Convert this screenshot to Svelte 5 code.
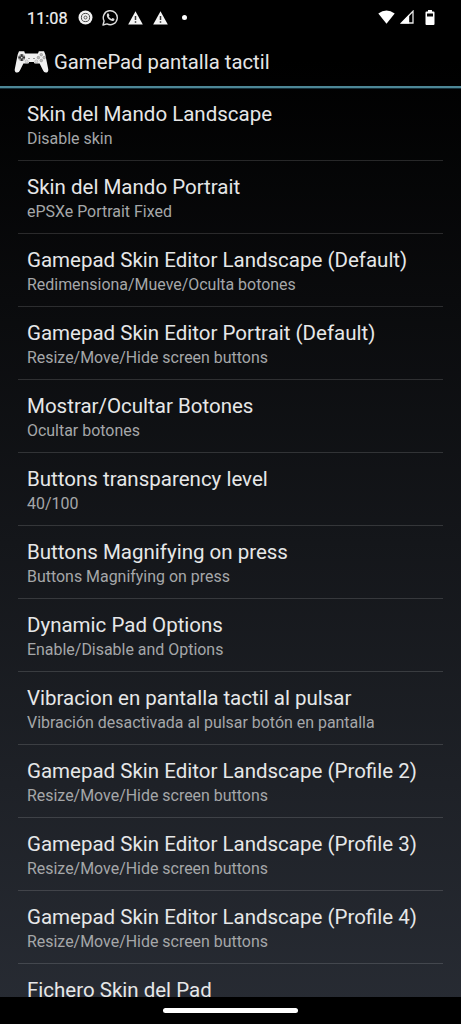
<script>
  const items = [
    ['Skin del Mando Landscape', 'Disable skin'],
    ['Skin del Mando Portrait', 'ePSXe Portrait Fixed'],
    ['Gamepad Skin Editor Landscape (Default)', 'Redimensiona/Mueve/Oculta botones'],
    ['Gamepad Skin Editor Portrait (Default)', 'Resize/Move/Hide screen buttons'],
    ['Mostrar/Ocultar Botones', 'Ocultar botones'],
    ['Buttons transparency level', '40/100'],
    ['Buttons Magnifying on press', 'Buttons Magnifying on press'],
    ['Dynamic Pad Options', 'Enable/Disable and Options'],
    ['Vibracion en pantalla tactil al pulsar', 'Vibración desactivada al pulsar botón en pantalla'],
    ['Gamepad Skin Editor Landscape (Profile 2)', 'Resize/Move/Hide screen buttons'],
    ['Gamepad Skin Editor Landscape (Profile 3)', 'Resize/Move/Hide screen buttons'],
    ['Gamepad Skin Editor Landscape (Profile 4)', 'Resize/Move/Hide screen buttons'],
    ['Fichero Skin del Pad', '']
  ];
</script>

<div class="screen">
  <div class="status">
    <span class="time">11:08</span>
    <svg class="ring" width="15" height="15" viewBox="0 0 15 15">
      <circle cx="7.5" cy="7.5" r="7" fill="#f2f2f2" />
      <circle cx="7.5" cy="7.5" r="4.1" fill="none" stroke="#444" stroke-width="1" />
      <circle cx="7.5" cy="7.5" r="1.5" fill="none" stroke="#555" stroke-width="1" />
    </svg>
    <svg class="chat" width="17" height="17" viewBox="0 0 17 17">
      <path d="M1 16l1.1-4A7 7 0 1 1 5 14.9z" fill="none" stroke="#ddd" stroke-width="1.4" stroke-linejoin="round" />
      <path d="M5.3 4.8c.6-.7 1.2-.6 1.5.1l.6 1.4c.1.4-.5.9-.6 1.2.6 1.2 1.5 2 2.7 2.5.4-.1.8-1 1.2-.9l1.5.7c.6.4.1 1.5-.5 1.9-1.2.8-3.2-.1-4.5-1.1C5.8 9.5 4 6.8 5.3 4.8z" fill="#ddd" />
    </svg>
    {#each [0, 1] as n}
      <svg class="warn" width="15" height="14" viewBox="0 0 15 14">
        <path d="M7.5 .3L14.8 13.5H.2z" fill="#f5f5f5" />
        <path d="M7.5 5v4M7.5 10.3v1.5" stroke="#333" stroke-width="1.5" />
      </svg>
    {/each}
    <span class="dot"></span>
    <span class="grow"></span>
    <svg class="wifi" width="17" height="14" viewBox="0 0 17 14">
      <path d="M.3 3.5Q8.5-2.7 16.7 3.5L8.5 13.7z" fill="#fff" />
    </svg>
    <svg class="signal" width="14" height="14" viewBox="0 0 14 14">
      <path d="M13 1.2V13H1.5z" fill="none" stroke="#e8e8e8" stroke-width="1.3" />
      <path d="M9.2 4.5V13.5H.7z" fill="#fff" />
    </svg>
    <svg class="battery" width="10" height="15" viewBox="0 0 10 15">
      <path d="M3 0h4v1.5h1.5q1 0 1 1V14q0 1-1 1h-7q-1 0-1-1V2.5q0-1 1-1H3z" fill="#fff" />
      <path d="M2 3.5h6v3H2z" fill="#080808" />
    </svg>
  </div>

  <header>
    <svg class="pad" width="35" height="24" viewBox="0 0 35 24">
      <path d="M5 1.2H10.2L11 3.4H24L24.8 1.2H30L31.3 4.4L34.3 19.5Q34.5 22.6 31.9 22.6Q30 22.7 29.1 20.5L25.6 13.5H20.6L19.8 12H15.2L14.4 13.5H9.4L5.9 20.5Q5 22.7 3.1 22.6Q.5 22.6 .7 19.5L3.7 4.4z" fill="#f1f1f1" />
      <circle cx="7.7" cy="7.6" r="3.5" fill="#aaa" />
      <path d="M7.7 4.3v6.6M4.4 7.6h6.600" stroke="#333" stroke-width="2" />
      <circle cx="7.7" cy="7.6" r=".9" fill="#ddd" />
      <path d="M14 8.5h2M19 8.5h2" stroke="#999" stroke-width="1.2" />
      <g fill="#bbb" stroke="#888" stroke-width=".6">
        <circle cx="27.3" cy="4.7" r="1.3" /><circle cx="27.3" cy="10.5" r="1.3" />
        <circle cx="24.4" cy="7.6" r="1.3" /><circle cx="30.2" cy="7.6" r="1.3" />
      </g>
      <circle cx="12.7" cy="11.4" r="1.5" fill="#ddd" stroke="#aaa" stroke-width=".6" />
      <circle cx="22.3" cy="11.4" r="1.5" fill="#ddd" stroke="#aaa" stroke-width=".6" />
    </svg>
    <h1>GamePad pantalla tactil</h1>
  </header>

  <main>
    {#each items as [title, summary]}
      <div class="row">
        <div class="title">{title}</div>
        <div class="summary">{summary}</div>
      </div>
    {/each}
  </main>

  <footer><span class="handle"></span></footer>
</div>

<style>
  :global(body) { background: #000; }
  .screen {
    width: 461px;
    height: 1024px;
    display: flex;
    flex-direction: column;
    overflow: hidden;
    font-family: Roboto, sans-serif;
    background: linear-gradient(#000 0, #000 60px, #282c34 1024px);
  }
  .status {
    flex: none;
    height: 36px;
    box-sizing: border-box;
    padding: 0 26px 1px 27px;
    display: flex;
    align-items: center;
    background: #000;
  }
  .status svg { flex: none; }
  .time { width: 51px; padding-top: 1px; font-size: 16.3px; color: #f2f2f2; -webkit-text-stroke: .2px #f2f2f2; }
  .chat { margin-left: 9px; }
  .warn { margin-left: 10px; }
  .chat + .warn { margin-left: 9px; }
  .dot { width: 5px; height: 5px; margin-left: 14px; border-radius: 50%; background: #fff; }
  .grow { flex: 1; }
  .wifi, .signal { margin-top: -2px; }
  .signal { margin-left: 5px; }
  .battery { margin-left: 11px; margin-top: -1px; }
  header {
    flex: none;
    height: 52px;
    box-sizing: border-box;
    padding: 2px 0 0 14px;
    display: flex;
    align-items: center;
    border-bottom: 2px solid #4d8797;
    box-shadow: 0 1px #15303a;
  }
  h1 { margin: 0 0 0 5px; font-size: 20.3px; font-weight: 400; color: #e6e6e6; line-height: 26px; }
  main { flex: 1; min-height: 0; overflow: hidden; margin-top: 1px; }
  .row {
    height: 73px;
    box-sizing: border-box;
    margin: 0 18px;
    padding: 13px 0 0 9px;
    border-bottom: 1px solid rgba(255, 255, 255, .14);
    white-space: nowrap;
  }
  .row:first-child { height: 72px; padding-top: 12px; }
  .title { font-size: 20.5px; line-height: 26px; color: #e6e7e8; }
  .summary { font-size: 15.95px; line-height: 24px; color: #a5a7a9; }
  footer {
    flex: none;
    height: 27px;
    display: flex;
    justify-content: center;
    align-items: center;
    background: #000;
  }
  .handle { width: 135px; height: 5px; border-radius: 3px; background: #fff; }
</style>
